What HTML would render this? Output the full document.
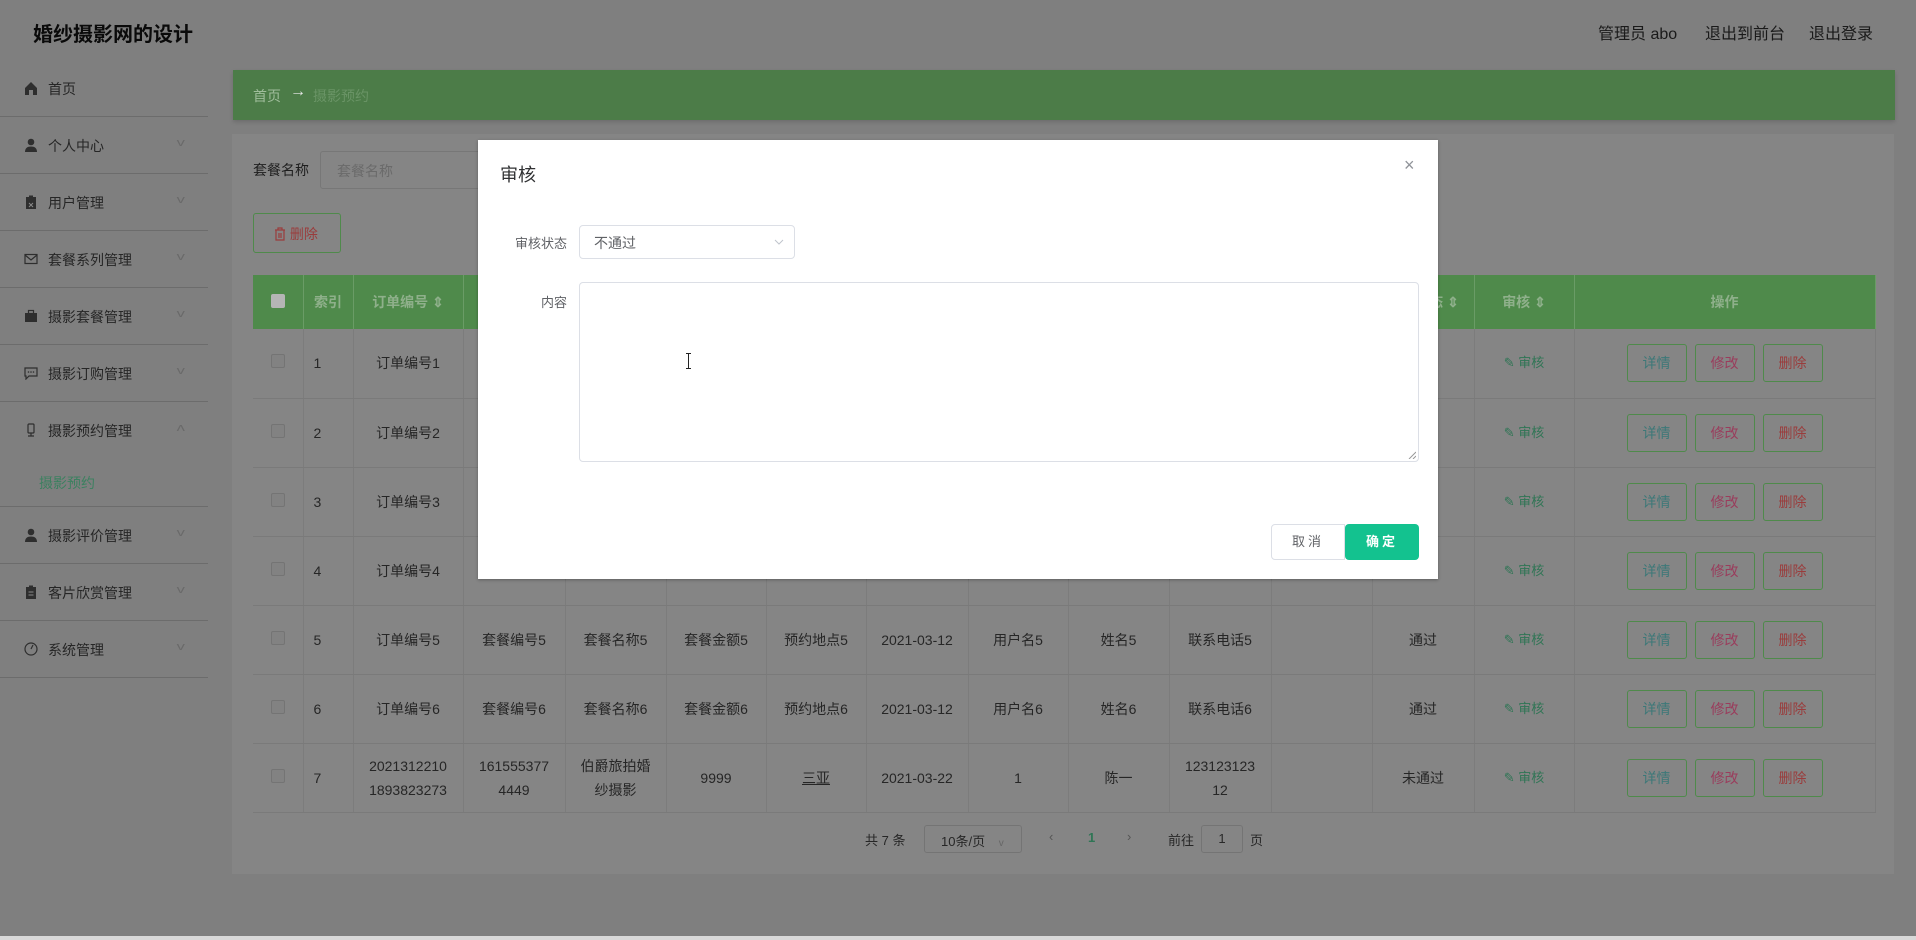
<!DOCTYPE html>
<html><head><meta charset="utf-8"><style>
*{margin:0;padding:0;box-sizing:border-box}
body{width:1916px;height:940px;overflow:hidden;background:#7f7f7f;font-family:"Liberation Sans","Noto Sans CJK SC",sans-serif;color:#282828;position:relative}
.a{position:absolute}
.title{left:33px;top:18px;font-size:20px;font-weight:bold;color:#0a0a0a}
.top{top:20px;font-size:16px;color:#1a1a1a}
.side{left:0;top:60px;width:208px}
.mi{height:57px;border-bottom:1px solid #6c6c6c;position:relative;font-size:14px;color:#262626}
.mi .ic{position:absolute;left:24px;top:21px;width:14px;height:14px}
.mi .t{position:absolute;left:48px;top:19px}
.mi .ch{position:absolute;left:178px;top:20px;color:#6a6a6a;font-size:11px;transform:scaleX(1.5)}
.sub{height:48px;border-bottom:1px solid #6c6c6c;position:relative;font-size:14px;color:#3c8060}
.card{left:232px;top:134px;width:1662px;height:740px;background:#858585}
.bc{left:233px;top:70px;width:1662px;height:50px;background:#4c7c48;box-shadow:0 2px 4px rgba(0,0,0,.15);font-size:14px}
table{border-collapse:collapse;table-layout:fixed;position:absolute;left:253px;top:275px;width:1622px;font-size:14px}
th{background:#4f8a4b;color:#8fb08b;height:54px;font-weight:bold;border-right:1px solid #6a9c66;font-size:14px}
td{height:69px;text-align:center;border-bottom:1px solid #7a7a7a;border-right:1px solid #7c7c7c;color:#262626;line-height:24px}
td.l{text-align:left;padding-left:10px}
.cb{display:inline-block;width:14px;height:14px;border:1px solid #747474;border-radius:2px;background:#828282}
.ob{display:inline-block;width:60px;height:38px;line-height:36px;border:1px solid #4f8a4b;border-radius:3px;margin:0 4px;background:#858585}
.sh{color:#2f7555;font-size:13px}
.dlg{left:478px;top:140px;width:960px;height:439px;background:#fff;box-shadow:0 1px 3px rgba(0,0,0,.3)}
</style></head><body>
<div class="a title">婚纱摄影网的设计</div>
<div class="a top" style="left:1598px">管理员 abo</div>
<div class="a top" style="left:1705px">退出到前台</div>
<div class="a top" style="left:1809px">退出登录</div>

<div class="a side">
<div class="mi"><svg class="ic" viewBox="0 0 14 14"><path d="M1 7L7 1l6 6v7H9V9H5v5H1z" fill="#2e2e2e"/></svg><span class="t">首页</span></div>
<div class="mi"><svg class="ic" viewBox="0 0 14 14"><circle cx="7" cy="4" r="3.3" fill="#2e2e2e"/><path d="M1 14c0-4 2.5-5.5 6-5.5S13 10 13 14z" fill="#2e2e2e"/></svg><span class="t">个人中心</span><span class="ch">v</span></div>
<div class="mi"><svg class="ic" viewBox="0 0 14 14"><rect x="2" y="2" width="10" height="12" fill="#2e2e2e"/><rect x="5" y="0.5" width="4" height="3" fill="#2e2e2e"/><path d="M5 8l4 4M9 8l-4 4" stroke="#888" stroke-width="1"/></svg><span class="t">用户管理</span><span class="ch">v</span></div>
<div class="mi"><svg class="ic" viewBox="0 0 14 14"><rect x="1" y="2.5" width="12" height="9" fill="none" stroke="#2e2e2e" stroke-width="1.2"/><path d="M1 3l6 5 6-5" fill="none" stroke="#2e2e2e" stroke-width="1.2"/></svg><span class="t">套餐系列管理</span><span class="ch">v</span></div>
<div class="mi"><svg class="ic" viewBox="0 0 14 14"><rect x="1" y="4" width="12" height="9" fill="#2e2e2e"/><rect x="4.5" y="1.5" width="5" height="3" fill="none" stroke="#2e2e2e" stroke-width="1.2"/></svg><span class="t">摄影套餐管理</span><span class="ch">v</span></div>
<div class="mi"><svg class="ic" viewBox="0 0 14 14"><path d="M1 2h12v8H5l-3 3v-3H1z" fill="none" stroke="#2e2e2e" stroke-width="1.2"/><circle cx="4.5" cy="6" r=".8" fill="#2e2e2e"/><circle cx="7" cy="6" r=".8" fill="#2e2e2e"/><circle cx="9.5" cy="6" r=".8" fill="#2e2e2e"/></svg><span class="t">摄影订购管理</span><span class="ch">v</span></div>
<div class="mi" style="border-bottom:none"><svg class="ic" viewBox="0 0 14 14"><rect x="4" y="1" width="6" height="9" rx="1" fill="none" stroke="#2e2e2e" stroke-width="1.2"/><path d="M7 10v3M4 13h6" stroke="#2e2e2e" stroke-width="1.2"/></svg><span class="t">摄影预约管理</span><span class="ch" style="transform:scaleX(1.5) rotate(180deg)">v</span></div>
<div class="sub"><span class="a" style="left:39px;top:14px">摄影预约</span></div>
<div class="mi"><svg class="ic" viewBox="0 0 14 14"><circle cx="7" cy="4" r="3.3" fill="#2e2e2e"/><path d="M1 14c0-4 2.5-5.5 6-5.5S13 10 13 14z" fill="#2e2e2e"/></svg><span class="t">摄影评价管理</span><span class="ch">v</span></div>
<div class="mi"><svg class="ic" viewBox="0 0 14 14"><rect x="2" y="2" width="10" height="12" fill="#2e2e2e"/><rect x="5" y="0.5" width="4" height="3" fill="#2e2e2e"/><path d="M4.5 7h5M4.5 10h5" stroke="#888"/></svg><span class="t">客片欣赏管理</span><span class="ch">v</span></div>
<div class="mi"><svg class="ic" viewBox="0 0 14 14"><circle cx="7" cy="7" r="6" fill="none" stroke="#2e2e2e" stroke-width="1.2"/><path d="M7 7l2-4" stroke="#2e2e2e" stroke-width="1.2"/></svg><span class="t">系统管理</span><span class="ch">v</span></div>
</div>

<div class="a card"></div>
<div class="a bc"><span class="a" style="left:20px;top:16px;color:#9fbd9b">首页</span><span class="a" style="left:57px;top:13px;color:#e8e8e8;font-size:16px">→</span><span class="a" style="left:80px;top:16px;color:#6a9466">摄影预约</span></div>

<div class="a" style="left:253px;top:160px;font-size:14px;color:#1e1e1e">套餐名称</div>
<div class="a" style="left:320px;top:151px;width:200px;height:38px;border:1px solid #777;border-radius:3px;background:#858585;font-size:14px;color:#6a6a6a;padding:9px 16px">套餐名称</div>
<div class="a" style="left:253px;top:213px;width:88px;height:40px;border:1px solid #4f8a4b;border-radius:3px;font-size:14px;color:#9a3c3c;padding:10px 0 0 20px">
<svg width="12" height="14" viewBox="0 0 12 14" style="vertical-align:-2px"><path d="M1 3h10M4 3V1h4v2M2 3v10h8V3M5 6v5M7 6v5" fill="none" stroke="#9a3c3c" stroke-width="1.2"/></svg> 删除</div>

<table>
<colgroup><col style="width:50px"><col style="width:50px"><col style="width:110px"><col style="width:102px"><col style="width:101px"><col style="width:100px"><col style="width:100px"><col style="width:102px"><col style="width:100px"><col style="width:101px"><col style="width:102px"><col style="width:101px"><col style="width:102px"><col style="width:100px"><col style="width:301px"></colgroup>
<tr><th><span class="cb" style="background:#b5b5b5;border-color:#b5b5b5"></span></th><th>索引</th><th>订单编号 ⇕</th><th>套餐编号</th><th>套餐名称</th><th>套餐金额</th><th>预约地点</th><th>预约日期</th><th>用户名</th><th>姓名</th><th>联系电话</th><th>审核回复</th><th>审核状态 ⇕</th><th>审核 ⇕</th><th>操作</th></tr>
<tr><td><span class="cb"></span></td><td class="l">1</td><td>订单编号1</td><td>套餐编号1</td><td>套餐名称1</td><td>套餐金额1</td><td>预约地点1</td><td>2021-03-12</td><td>用户名1</td><td>姓名1</td><td>联系电话1</td><td></td><td>通过</td><td class="sh">✎ 审核</td><td><span class="ob" style="color:#3c7878">详情</span><span class="ob" style="color:#9a3c5c">修改</span><span class="ob" style="color:#9a3c3c">删除</span></td></tr>
<tr><td><span class="cb"></span></td><td class="l">2</td><td>订单编号2</td><td>套餐编号2</td><td>套餐名称2</td><td>套餐金额2</td><td>预约地点2</td><td>2021-03-12</td><td>用户名2</td><td>姓名2</td><td>联系电话2</td><td></td><td>通过</td><td class="sh">✎ 审核</td><td><span class="ob" style="color:#3c7878">详情</span><span class="ob" style="color:#9a3c5c">修改</span><span class="ob" style="color:#9a3c3c">删除</span></td></tr>
<tr><td><span class="cb"></span></td><td class="l">3</td><td>订单编号3</td><td>套餐编号3</td><td>套餐名称3</td><td>套餐金额3</td><td>预约地点3</td><td>2021-03-12</td><td>用户名3</td><td>姓名3</td><td>联系电话3</td><td></td><td>通过</td><td class="sh">✎ 审核</td><td><span class="ob" style="color:#3c7878">详情</span><span class="ob" style="color:#9a3c5c">修改</span><span class="ob" style="color:#9a3c3c">删除</span></td></tr>
<tr><td><span class="cb"></span></td><td class="l">4</td><td>订单编号4</td><td>套餐编号4</td><td>套餐名称4</td><td>套餐金额4</td><td>预约地点4</td><td>2021-03-12</td><td>用户名4</td><td>姓名4</td><td>联系电话4</td><td></td><td>通过</td><td class="sh">✎ 审核</td><td><span class="ob" style="color:#3c7878">详情</span><span class="ob" style="color:#9a3c5c">修改</span><span class="ob" style="color:#9a3c3c">删除</span></td></tr>
<tr><td><span class="cb"></span></td><td class="l">5</td><td>订单编号5</td><td>套餐编号5</td><td>套餐名称5</td><td>套餐金额5</td><td>预约地点5</td><td>2021-03-12</td><td>用户名5</td><td>姓名5</td><td>联系电话5</td><td></td><td>通过</td><td class="sh">✎ 审核</td><td><span class="ob" style="color:#3c7878">详情</span><span class="ob" style="color:#9a3c5c">修改</span><span class="ob" style="color:#9a3c3c">删除</span></td></tr>
<tr><td><span class="cb"></span></td><td class="l">6</td><td>订单编号6</td><td>套餐编号6</td><td>套餐名称6</td><td>套餐金额6</td><td>预约地点6</td><td>2021-03-12</td><td>用户名6</td><td>姓名6</td><td>联系电话6</td><td></td><td>通过</td><td class="sh">✎ 审核</td><td><span class="ob" style="color:#3c7878">详情</span><span class="ob" style="color:#9a3c5c">修改</span><span class="ob" style="color:#9a3c3c">删除</span></td></tr>
<tr><td><span class="cb"></span></td><td class="l">7</td><td>2021312210<br>1893823273</td><td>161555377<br>4449</td><td>伯爵旅拍婚<br>纱摄影</td><td>9999</td><td><u>三亚</u></td><td>2021-03-22</td><td>1</td><td>陈一</td><td>123123123<br>12</td><td></td><td>未通过</td><td class="sh">✎ 审核</td><td><span class="ob" style="color:#3c7878">详情</span><span class="ob" style="color:#9a3c5c">修改</span><span class="ob" style="color:#9a3c3c">删除</span></td></tr>
</table>

<div class="a" style="left:865px;top:830px;font-size:13px;color:#262626">共 7 条</div>
<div class="a" style="left:924px;top:825px;width:98px;height:28px;border:1px solid #747474;border-radius:3px;font-size:13px;padding:5px 0 0 16px;color:#262626">10条/页 <span style="color:#666;margin-left:10px;font-size:10px">v</span></div>
<div class="a" style="left:1049px;top:829px;font-size:13px;color:#555">‹</div>
<div class="a" style="left:1088px;top:830px;font-size:13px;color:#2f7555;font-weight:bold">1</div>
<div class="a" style="left:1127px;top:829px;font-size:13px;color:#555">›</div>
<div class="a" style="left:1168px;top:830px;font-size:13px;color:#262626">前往</div>
<div class="a" style="left:1201px;top:825px;width:42px;height:28px;border:1px solid #747474;border-radius:3px;font-size:13px;text-align:center;padding-top:5px">1</div>
<div class="a" style="left:1250px;top:830px;font-size:13px;color:#262626">页</div>
<div class="a" style="left:0;top:936px;width:1916px;height:4px;background:#d8d8d8"></div>

<div class="a dlg">
<div class="a" style="left:22px;top:21px;font-size:18px;color:#303133">审核</div>
<div class="a" style="left:926px;top:15px;font-size:18px;color:#909399">×</div>
<div class="a" style="left:29px;top:93px;font-size:13px;color:#606266;width:60px;text-align:right">审核状态</div>
<div class="a" style="left:101px;top:85px;width:216px;height:34px;border:1px solid #dcdfe6;border-radius:4px;font-size:14px;color:#606266;padding:7px 14px">不通过<svg class="a" style="right:10px;top:13px" width="10" height="6" viewBox="0 0 10 6"><path d="M1 1l4 4 4-4" fill="none" stroke="#c0c4cc"/></svg></div>
<div class="a" style="left:29px;top:152px;font-size:13px;color:#606266;width:60px;text-align:right">内容</div>
<div class="a" style="left:101px;top:142px;width:840px;height:180px;border:1px solid #dcdfe6;border-radius:4px"><svg class="a" style="right:2px;bottom:2px" width="8" height="8" viewBox="0 0 8 8"><path d="M1 8L8 1M5 8l3-3" stroke="#999"/></svg></div>
<svg class="a" style="left:207px;top:213px" width="7" height="16" viewBox="0 0 7 16"><path d="M1 .5h5M3.5 .5v15M1 15.5h5" stroke="#222"/></svg>
<div class="a" style="left:793px;top:384px;width:74px;height:36px;border:1px solid #dcdfe6;border-radius:4px 0 0 4px;font-size:13px;color:#606266;text-align:center;line-height:34px;letter-spacing:3px">取消</div>
<div class="a" style="left:867px;top:384px;width:74px;height:36px;background:#13c28f;border-radius:4px;font-size:13px;color:#fff;text-align:center;line-height:36px;letter-spacing:3px;font-weight:bold">确定</div>
</div>
</body></html>
